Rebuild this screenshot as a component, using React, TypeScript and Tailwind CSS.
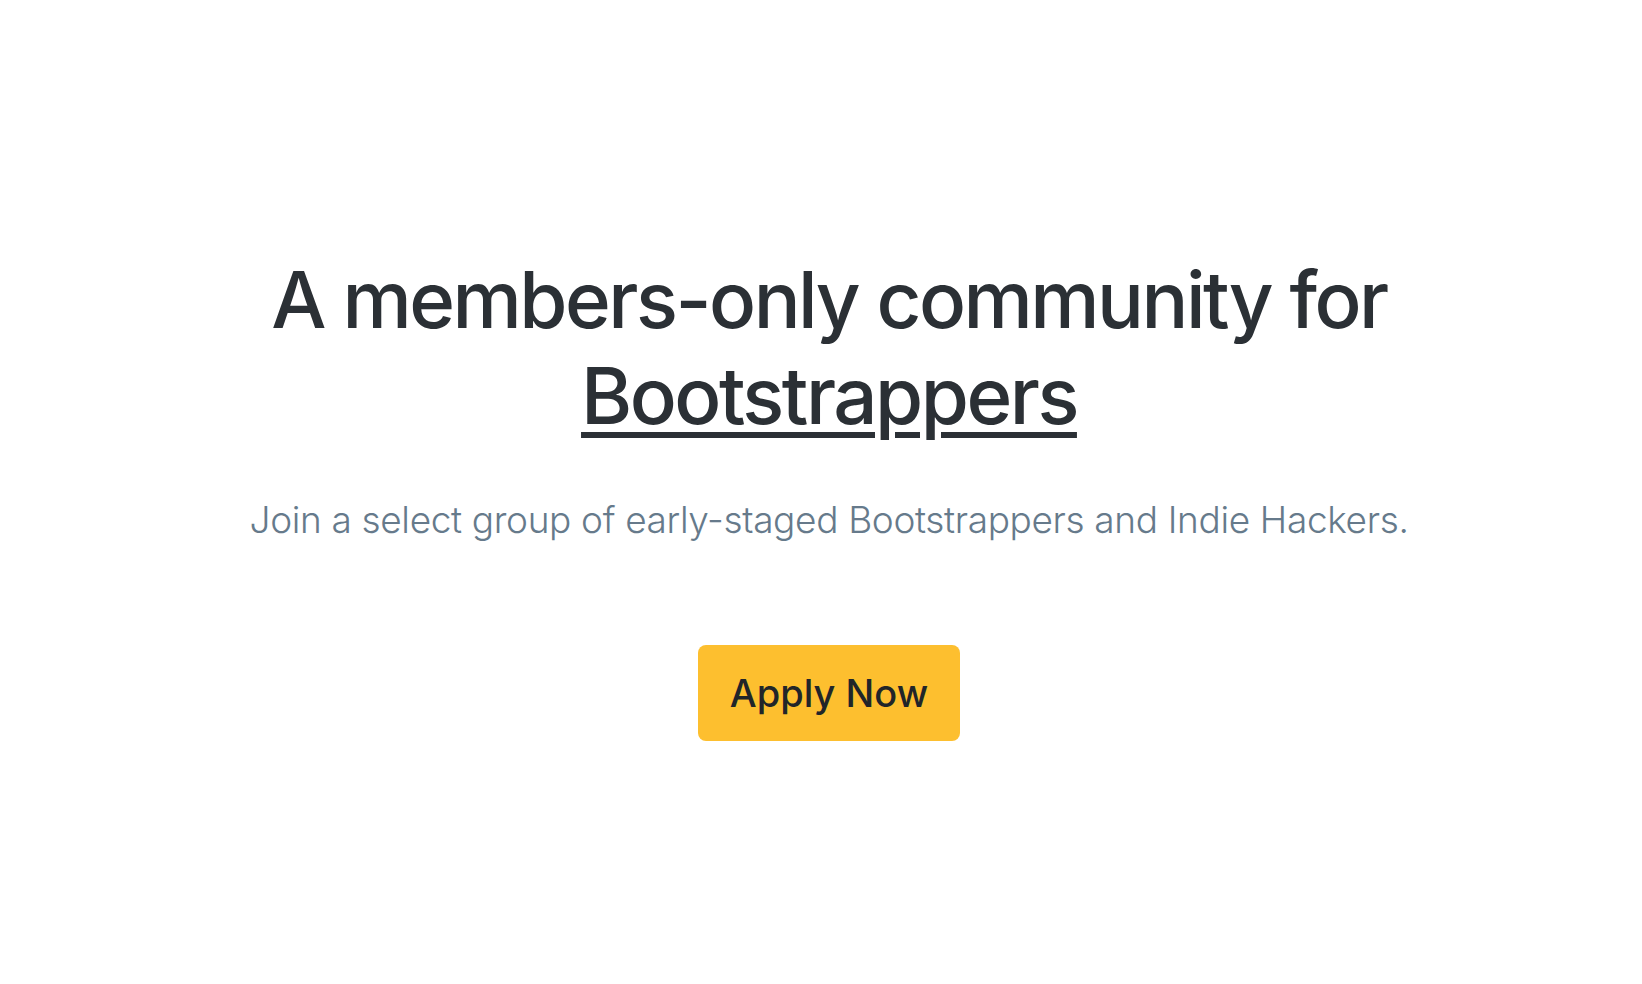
import React from "react";

export default function App() {
  return (
    <main
      className="min-h-screen w-full bg-white flex flex-col items-center pl-4 pt-[252px]"
      style={{ fontFamily: "Inter, 'Noto Sans', sans-serif" }}
    >
      <h1 className="text-center text-[78px] leading-[96px] font-medium text-[#2b3035] tracking-[-2.5px]">
        A members-only community for
        <br />
        <span className="underline decoration-[6px] underline-offset-[8px]">
          Bootstrappers
        </span>
      </h1>
      <p className="mt-[52px] text-center text-[37px] leading-[48px] font-light text-[#667a8b] tracking-[-0.35px]">
        Join a select group of early-staged Bootstrappers and Indie Hackers.
      </p>
      <button className="mt-[101px] h-[96px] px-8 rounded-lg bg-[#fdbf2f] text-[38px] font-medium text-[#212529]">
        Apply Now
      </button>
    </main>
  );
}
